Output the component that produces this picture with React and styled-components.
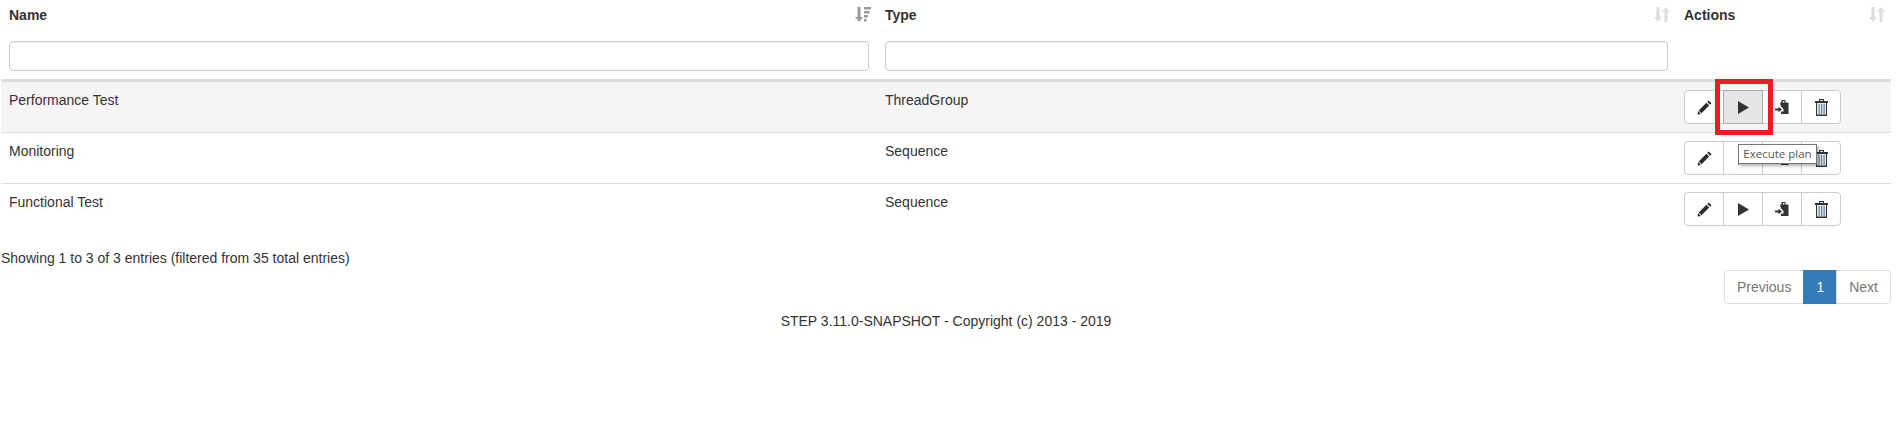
import React from 'react';
import styled, { createGlobalStyle } from 'styled-components';

const rows = [
  { name: 'Performance Test', type: 'ThreadGroup', hovered: true },
  { name: 'Monitoring', type: 'Sequence' },
  { name: 'Functional Test', type: 'Sequence' },
];

const PencilIcon = () => (
  <svg width="15" height="15" viewBox="0 0 15 15">
    <path fill="#2b2b2b" d="M11.700.5l2.800 2.800-1.400 1.400-2.800-2.800zM9.400 2.800l2.800 2.800-7.700 7.700-2.800-2.800z" />
    <path fill="#2b2b2b" d="M1.100 11.100l2.800 2.800-3.400.6z" />
  </svg>
);

const PlayIcon = () => (
  <svg width="11" height="13" viewBox="0 0 11 13">
    <path fill="#333" d="M0 0l11 6.500L0 13z" />
  </svg>
);

const ImportIcon = () => (
  <svg width="15" height="14" viewBox="0 0 15 14">
    <path fill="#333" d="M5 2.500h1.500V.5c0-.3.300-.5.500-.5h3c.3 0 .5.200.5.500v2H13l.5.500V14H6v-2.500h2.500V9L6 6.500z" />
    <circle cx="8.700" cy="1.800" r=".9" fill="#fff" />
    <path fill="#333" d="M0 8.500h3.500V6.800L7 9.500l-3.500 2.700V10.500H0z" />
  </svg>
);

const TrashIcon = () => (
  <svg width="13" height="17" viewBox="0 0 13 17">
    <path fill="#333" d="M4 0h5v2h4v2H0V2h4zM5.200 1v1h2.600V1z" />
    <path fill="#dfe8ee" d="M1 4h11v13H1z" />
    <path fill="#333" d="M1 4h1v13H1zM11 4h1v13h-1zM1 15.500h11V17H1z" />
    <path fill="#6f8796" d="M3.500 5h1.200v10H3.500zM6 5h1.200v10H6zM8.500 5h1.200v10H8.500z" />
  </svg>
);

const SortIcon = ({ active }) => (
  <svg width="16" height="15" viewBox="0 0 16 15">
    <path fill={active ? '#999' : '#ddd'} d="M2.500 0h3v10h2.500L4 15 0 10h2.500z" />
    {active ? (
      <path fill="#999" d="M9 0h7v2.500H9zM9 4h5.500v2.500H9zM9 8h4v2.500H9zM9 12h2.500v2.500H9z" />
    ) : (
      <path fill="#ddd" d="M10.500 15h3V5H16L12 0 8 5h2.500z" />
    )}
  </svg>
);

const App = () => (
  <Page>
    <GlobalStyle />
    <Table>
      <colgroup>
        <NameCol />
        <TypeCol />
        <col />
      </colgroup>
      <thead>
        <tr>
          <HeadCell>Name<SortSlot><SortIcon active /></SortSlot></HeadCell>
          <HeadCell>Type<SortSlot><SortIcon /></SortSlot></HeadCell>
          <HeadCell>Actions<SortSlot><SortIcon /></SortSlot></HeadCell>
        </tr>
        <tr>
          <FilterCell><FilterInput type="text" /></FilterCell>
          <FilterCell><FilterInput type="text" /></FilterCell>
          <FilterCell />
        </tr>
      </thead>
      <tbody>
        {rows.map((row) => (
          <Row key={row.name} $hovered={row.hovered}>
            <Cell>{row.name}</Cell>
            <Cell>{row.type}</Cell>
            <Cell>
              <ButtonGroup>
                <ActionButton><PencilIcon /></ActionButton>
                <ActionButton $pressed={row.hovered}>
                  <PlayIcon />
                  {row.hovered && <Highlight />}
                  {row.hovered && <Tooltip>Execute plan</Tooltip>}
                </ActionButton>
                <ActionButton><ImportIcon /></ActionButton>
                <ActionButton><TrashIcon /></ActionButton>
              </ButtonGroup>
            </Cell>
          </Row>
        ))}
      </tbody>
    </Table>
    <Info>Showing 1 to 3 of 3 entries (filtered from 35 total entries)</Info>
    <Pagination>
      <PageLink $first>Previous</PageLink>
      <PageLink $current>1</PageLink>
      <PageLink $last>Next</PageLink>
    </Pagination>
    <Footer>STEP 3.11.0-SNAPSHOT - Copyright (c) 2013 - 2019</Footer>
  </Page>
);

export default App;

const GlobalStyle = createGlobalStyle`
  body {
    margin: 0;
    background: #fff;
    color: #333;
    font-family: "Liberation Sans", Arial, sans-serif;
    font-size: 14px;
    line-height: 20px;
  }
`;

const Page = styled.div`
  width: 1891px;
  padding-left: 1px;
  box-sizing: border-box;
`;

const Table = styled.table`
  width: 1890px;
  table-layout: fixed;
  border-collapse: collapse;
`;

const NameCol = styled.col`
  width: 876px;
`;

const TypeCol = styled.col`
  width: 799px;
`;

const HeadCell = styled.th`
  position: relative;
  height: 30px;
  padding: 5px 8px;
  box-sizing: border-box;
  text-align: left;
  font-weight: bold;
`;

const SortSlot = styled.span`
  position: absolute;
  right: 6px;
  top: 7px;
  line-height: 0;
`;

const FilterCell = styled.th`
  height: 50px;
  padding: 11px 8px 8px;
  box-sizing: border-box;
  border-bottom: 3px solid #ddd;
`;

const FilterInput = styled.input`
  display: block;
  width: 100%;
  height: 30px;
  box-sizing: border-box;
  background: #fff;
  border: 1px solid #ccc;
  border-radius: 4px;
  box-shadow: inset 0 1px 1px rgba(0, 0, 0, 0.075);
`;

const Row = styled.tr`
  height: 51px;
  background: ${(p) => (p.$hovered ? '#f5f5f5' : '#fff')};
`;

const Cell = styled.td`
  padding: 8px;
  vertical-align: top;
  border-top: 1px solid #ddd;
  tr:first-child > & {
    border-top: 0;
  }
`;

const ButtonGroup = styled.div`
  display: flex;
`;

const ActionButton = styled.div`
  position: relative;
  display: flex;
  align-items: center;
  justify-content: center;
  width: 40px;
  height: 34px;
  box-sizing: border-box;
  margin-left: -1px;
  background: ${(p) => (p.$pressed ? '#e6e6e6' : '#fff')};
  border: 1px solid ${(p) => (p.$pressed ? '#adadad' : '#ccc')};
  z-index: ${(p) => (p.$pressed ? 2 : 'auto')};

  &:first-child {
    margin-left: 0;
    border-radius: 4px 0 0 4px;
  }

  &:last-child {
    border-radius: 0 4px 4px 0;
  }
`;

const Highlight = styled.span`
  position: absolute;
  left: -9px;
  top: -12px;
  width: 58px;
  height: 56px;
  box-sizing: border-box;
  border: 5px solid #ed1c24;
`;

const Tooltip = styled.span`
  position: absolute;
  left: 14px;
  top: 53px;
  z-index: 3;
  width: 79px;
  height: 20px;
  box-sizing: border-box;
  background: #fff;
  border: 1px solid #767676;
  box-shadow: 2px 2px 3px rgba(0, 0, 0, 0.3);
  font-family: "Open Sans", sans-serif;
  font-size: 11.500px;
  line-height: 18px;
  text-align: center;
  white-space: nowrap;
  color: #575757;
`;

const Info = styled.div`
  padding-top: 13px;
  height: 37px;
  box-sizing: border-box;
`;

const Pagination = styled.div`
  display: flex;
  justify-content: flex-end;
  margin-top: -2px;
`;

const PageLink = styled.span`
  height: 34px;
  box-sizing: border-box;
  padding: 6px 12px;
  margin-left: -1px;
  background: ${(p) => (p.$current ? '#337ab7' : '#fff')};
  border: 1px solid ${(p) => (p.$current ? '#337ab7' : '#ddd')};
  color: ${(p) => (p.$current ? '#fff' : '#777')};
  border-radius: ${(p) => (p.$first ? '4px 0 0 4px' : p.$last ? '0 4px 4px 0' : '0')};
`;

const Footer = styled.div`
  margin-top: 7px;
  text-align: center;
`;
